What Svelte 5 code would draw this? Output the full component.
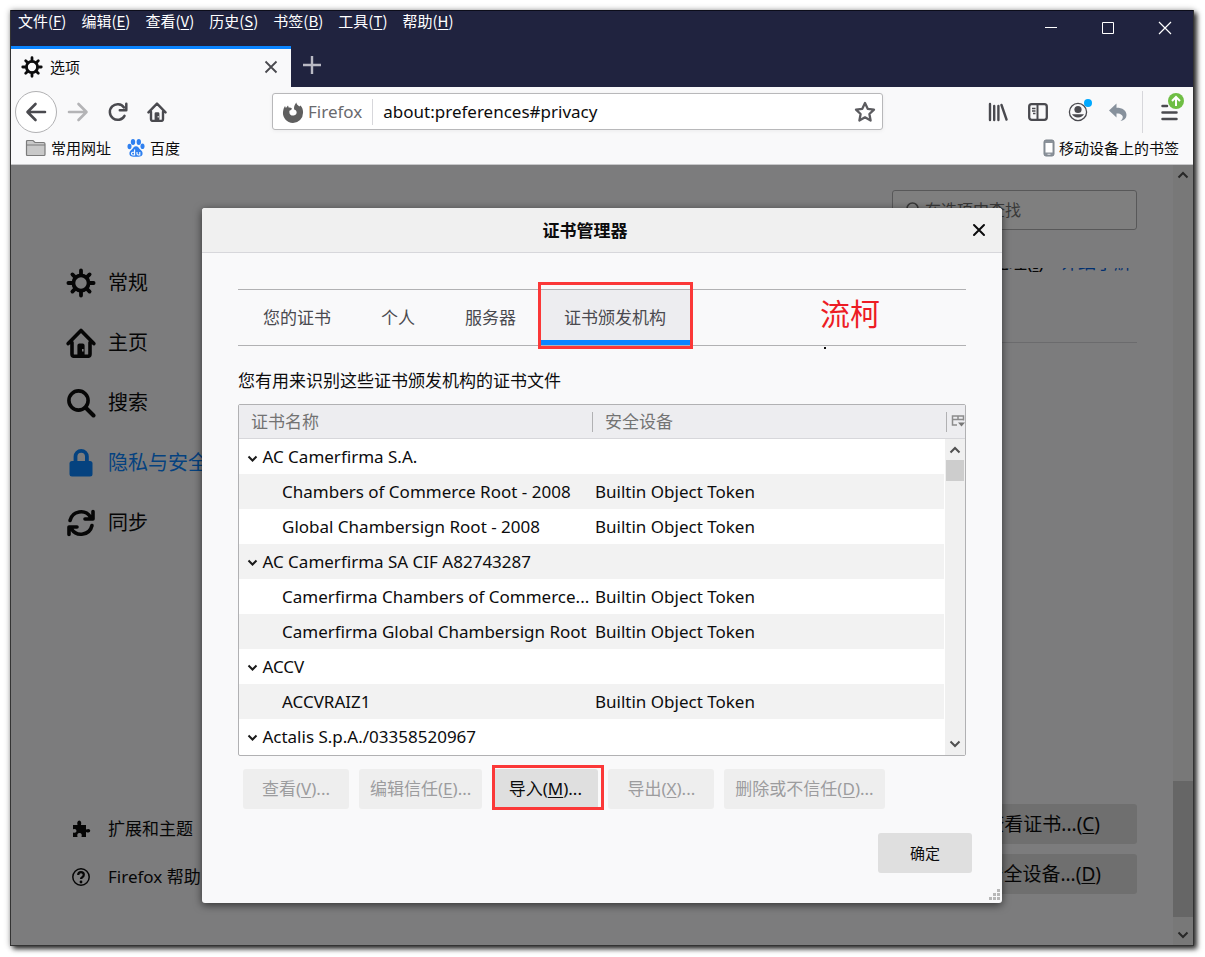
<script lang="ts">
	type Entry = { label: string; key: string }
	type Cert = { name: string; device?: string }

	const menus: Entry[] = [
		{ label: '文件', key: 'F' },
		{ label: '编辑', key: 'E' },
		{ label: '查看', key: 'V' },
		{ label: '历史', key: 'S' },
		{ label: '书签', key: 'B' },
		{ label: '工具', key: 'T' },
		{ label: '帮助', key: 'H' },
	]

	const categories = [
		{ id: 'general', label: '常规' },
		{ id: 'home', label: '主页' },
		{ id: 'search', label: '搜索' },
		{ id: 'privacy', label: '隐私与安全' },
		{ id: 'sync', label: '同步' },
	]

	const tabs = ['您的证书', '个人', '服务器', '证书颁发机构']
	let activeTab = $state('证书颁发机构')

	const certs: Cert[] = [
		{ name: 'AC Camerfirma S.A.' },
		{ name: 'Chambers of Commerce Root - 2008', device: 'Builtin Object Token' },
		{ name: 'Global Chambersign Root - 2008', device: 'Builtin Object Token' },
		{ name: 'AC Camerfirma SA CIF A82743287' },
		{ name: 'Camerfirma Chambers of Commerce...', device: 'Builtin Object Token' },
		{ name: 'Camerfirma Global Chambersign Root', device: 'Builtin Object Token' },
		{ name: 'ACCV' },
		{ name: 'ACCVRAIZ1', device: 'Builtin Object Token' },
		{ name: 'Actalis S.p.A./03358520967' },
	]

	const actions = [
		{ label: '查看', key: 'V', enabled: false },
		{ label: '编辑信任', key: 'E', enabled: false },
		{ label: '导入', key: 'M', enabled: true },
		{ label: '导出', key: 'X', enabled: false },
		{ label: '删除或不信任', key: 'D', enabled: false },
	]
</script>

{#snippet gear(size: number)}
	<svg width={size} height={size} viewBox="0 0 30 30" aria-hidden="true">
		<g fill="none" stroke="currentColor" stroke-linecap="round">
			<circle cx="15" cy="15" r="7.6" stroke-width="3.8" />
			<path
				stroke-width="3.8"
				d="M15 7V2.4M15 23v4.6M7 15H2.4M23 15h4.6M9.3 9.3 6.4 6.4M20.7 9.3l2.9-2.9M9.3 20.7l-2.9 2.9M20.7 20.7l2.9 2.9"
			/>
		</g>
	</svg>
{/snippet}

{#snippet house(size: number)}
	<svg width={size} height={size} viewBox="0 0 30 30" aria-hidden="true">
		<g fill="none" stroke="currentColor" stroke-width="3.6" stroke-linejoin="round" stroke-linecap="round">
			<path d="M2.2 15.6 15 2.4l12.800 13.200M6 14.500V26q0 2.300 2.300 2.300h13.400q2.300 0 2.300-2.300V14.500" />
		</g>
		<path fill="currentColor" fill-rule="evenodd" d="M11.400 28V17.400q0-2 2-2h3.200q2 0 2 2V28zM16 21v2.400h1.600V21z" />
	</svg>
{/snippet}

{#snippet chevron(up: boolean)}
	<svg width="12" height="12" viewBox="0 0 12 12" aria-hidden="true">
		<path d={up ? 'M1.5 8.5 6 4l4.5 4.5' : 'M1.5 3.5 6 8l4.5-4.5'} fill="none" stroke="#505050" stroke-width="2" />
	</svg>
{/snippet}

<div class="window">
	<header class="titlebar">
		<nav class="menus">
			{#each menus as menu}
				<button>{menu.label}(<u>{menu.key}</u>)</button>
			{/each}
		</nav>
		<div class="controls">
			<button aria-label="最小化">
				<svg width="14" height="14" viewBox="0 0 14 14"><path d="M1 6.500h12" stroke="#fff" /></svg>
			</button>
			<button aria-label="最大化">
				<svg width="14" height="14" viewBox="0 0 14 14"><path d="M1.500 1.500h11v11h-11z" fill="none" stroke="#fff" /></svg>
			</button>
			<button aria-label="关闭">
				<svg width="14" height="14" viewBox="0 0 14 14"><path d="m1 1 12 12M13 1 1 13" stroke="#fff" stroke-width="1.200" /></svg>
			</button>
		</div>
	</header>

	<div class="tabstrip">
		<div class="browser-tab">
			{@render gear(22)}
			<span>选项</span>
			<button aria-label="关闭标签页">
				<svg width="14" height="14" viewBox="0 0 14 14"><path d="m1.500 1.500 11 11m0-11-11 11" stroke="#4a4a4f" stroke-width="1.800" /></svg>
			</button>
		</div>
		<button class="new-tab" aria-label="新建标签页">
			<svg width="20" height="20" viewBox="0 0 20 20"><path d="M10 1v18M1 10h18" stroke="#b9b9c4" stroke-width="2.400" /></svg>
		</button>
	</div>

	<div class="toolbar">
		<div class="nav-buttons">
			<button class="back" aria-label="后退">
				<svg width="22" height="20" viewBox="0 0 22 20">
					<path d="M20 10H3m7.500-8L2.500 10l8 8" fill="none" stroke="#4a4a4f" stroke-width="2.600" stroke-linecap="round" stroke-linejoin="round" />
				</svg>
			</button>
			<button aria-label="前进">
				<svg width="22" height="20" viewBox="0 0 22 20">
					<path d="M2 10h17m-7.500-8 8 8-8 8" fill="none" stroke="#b4b4b6" stroke-width="2.600" stroke-linecap="round" stroke-linejoin="round" />
				</svg>
			</button>
			<button aria-label="刷新">
				<svg width="22" height="22" viewBox="0 0 22 22">
					<path d="M17.500 14.800a7.800 7.800 0 1 1-.5-8.300" fill="none" stroke="#4a4a4f" stroke-width="2.500" stroke-linecap="round" />
					<path d="M19.300 2.800v6.500h-6.500" fill="none" stroke="#4a4a4f" stroke-width="2.500" stroke-linecap="round" stroke-linejoin="round" />
				</svg>
			</button>
			<button class="grey" aria-label="主页">{@render house(20)}</button>
		</div>

		<div class="urlbar">
			<svg width="22" height="22" viewBox="0 0 22 22" aria-hidden="true">
				<path
					fill="#5f5f5f"
					d="M11 22A10 10 0 0 1 1.200 9.800C1.500 8 2 6.600 3 5l.9 2L6 4.500l.8 2.200c1-.2 2 0 3 .5-.1 1.600-1 2-2.300 2.500-.8 4.300 2.500 5.600 5 4.600 3-1.200 2.800-5-.3-5.700C12 7.500 11.500 5 14.300 1.500c.3 2 1.500 2.500 3 4l1.200-1C20.500 6.500 21.200 9 21 12A10 10 0 0 1 11 22z"
				/>
			</svg>
			<span class="identity">Firefox</span>
			<input type="text" aria-label="地址" value="about:preferences#privacy" />
			<button aria-label="添加书签">
				<svg width="22" height="22" viewBox="0 0 22 22">
					<path d="m11 2 2.700 5.800 6.300.8-4.600 4.400 1.200 6.500-5.600-3.200-5.600 3.200L6.600 13 2 8.600l6.300-.8z" fill="none" stroke="#5c5c60" stroke-width="2.300" stroke-linejoin="round" />
				</svg>
			</button>
		</div>

		<div class="tools">
			<button aria-label="我的足迹">
				<svg width="20" height="20" viewBox="0 0 20 20">
					<path d="M2 2v16M6.200 4v14M10.400 4v14M13.500 3l5 14.500" fill="none" stroke="#4a4a4f" stroke-width="2.400" stroke-linecap="round" />
				</svg>
			</button>
			<button aria-label="侧栏">
				<svg width="20" height="20" viewBox="0 0 20 20">
					<rect x="1.200" y="2.200" width="17.600" height="15.600" rx="2.500" fill="none" stroke="#4a4a4f" stroke-width="2.300" />
					<path d="M9.500 2.500v15" stroke="#4a4a4f" stroke-width="2" />
					<path d="M4 6.500h3.500M4 9h3.500M5 11.500h2.500" stroke="#4a4a4f" stroke-width="1.300" />
				</svg>
			</button>
			<button class="badged" aria-label="账户">
				<svg width="20" height="20" viewBox="0 0 20 20">
					<circle cx="10" cy="10" r="8.600" fill="none" stroke="#4a4a4f" stroke-width="1.300" />
					<circle cx="10" cy="7.500" r="3.600" fill="#4a4a4f" />
					<path d="M4 12.300h12a6.500 5 0 0 1-12 0z" fill="#4a4a4f" />
				</svg>
				<i class="dot"></i>
			</button>
			<button aria-label="撤销关闭标签页">
				<svg width="20" height="20" viewBox="0 0 20 20">
					<path d="M1 8.500 8.500 1.500v4.200c6 0 10 2.600 10 7.300 0 3.300-2.200 5.300-6 6 2.400-2 3-4 1.500-5.700-1.200-1.500-3-1.800-5.500-1.800v4z" fill="#87919c" />
				</svg>
			</button>
			<span class="divider"></span>
			<button class="badged" aria-label="打开菜单">
				<svg width="20" height="20" viewBox="0 0 20 20">
					<path d="M3.500 4H8M3.500 10.500h14M3.500 17h14" stroke="#4a4a4f" stroke-width="2.500" stroke-linecap="round" />
				</svg>
				<i class="update">
					<svg width="16" height="16" viewBox="0 0 16 16">
						<circle cx="8" cy="8" r="8" fill="#6fbe44" />
						<path d="M8 13V4M4 8l4-4 4 4" fill="none" stroke="#fff" stroke-width="2" />
					</svg>
				</i>
			</button>
		</div>
	</div>

	<div class="bookmarks">
		<a href="#common">
			<svg width="22" height="18" viewBox="0 0 22 18" aria-hidden="true">
				<path d="M1.500 15.500V2.500q0-1 1-1h5.500l2 2h8.500q1.500 0 1.500 1.500v10.500q0 1-1 1h-16.500q-1 0-1-1z" fill="#c9c9c9" stroke="#7b7b7b" stroke-width="1.200" />
				<path d="M2 6h18" stroke="#7b7b7b" />
			</svg>
			常用网址
		</a>
		<a href="#baidu">
			<svg width="20" height="20" viewBox="0 0 20 20" aria-hidden="true">
				<g fill="#2f80f0">
					<ellipse cx="7" cy="4" rx="2.200" ry="3" />
					<ellipse cx="12.800" cy="4" rx="2.200" ry="3" />
					<ellipse cx="3.500" cy="8.500" rx="2" ry="2.800" />
					<ellipse cx="16.500" cy="8.300" rx="2" ry="2.800" />
					<path d="M10 8.200c2 0 2.800 1.800 4.200 3.300 1.500 1.400 2.800 2.600 2.300 4.800-.5 2-2 2.500-6.500 2.500s-6-.5-6.500-2.500c-.5-2.200.8-3.400 2.300-4.800C7.200 10 8 8.200 10 8.200z" />
				</g>
				<path d="M8.600 11.500V17H6.800q-1.300 0-1.300-1.400T6.800 14.200h1.600M11 14v1.800q0 1.200 1.200 1.200h1.600V14" fill="none" stroke="#fff" stroke-width="1.100" />
			</svg>
			百度
		</a>
		<a href="#mobile" class="mobile">
			<svg width="12" height="18" viewBox="0 0 12 18" aria-hidden="true">
				<rect x="1" y="1" width="10" height="16" rx="2" fill="#8b929a" stroke="#7b838b" />
				<path d="M2.500 4h7v9.500h-7z" fill="#fff" />
				<path d="M4.500 15.300h3" stroke="#dfe2e5" />
			</svg>
			移动设备上的书签
		</a>
	</div>

	<div class="content">
		<div class="page">
			<nav class="sidebar">
				{#each categories as item}
					<a href="#{item.id}" class:selected={item.id === 'privacy'}>
						{#if item.id === 'general'}
							{@render gear(30)}
						{:else if item.id === 'home'}
							{@render house(30)}
						{:else if item.id === 'search'}
							<svg width="30" height="30" viewBox="0 0 30 30" aria-hidden="true">
								<circle cx="12.500" cy="12.500" r="9.600" fill="none" stroke="currentColor" stroke-width="3.600" />
								<path d="m19.500 19.500 8 8" stroke="currentColor" stroke-width="4" stroke-linecap="round" />
							</svg>
						{:else if item.id === 'privacy'}
							<svg width="30" height="30" viewBox="0 0 30 30" aria-hidden="true">
								<rect x="3.500" y="13" width="23" height="15.500" rx="2.500" fill="currentColor" />
								<path d="M9.500 14V8.500a5.700 5.700 0 0 1 11.400 0V14" fill="none" stroke="currentColor" stroke-width="3.800" />
							</svg>
						{:else}
							<svg width="30" height="30" viewBox="0 0 30 30" aria-hidden="true">
								<g fill="none" stroke="currentColor" stroke-width="3.600" stroke-linecap="round" stroke-linejoin="round">
									<path d="M4 12.500A11.300 11.300 0 0 1 24.500 9M27 3.500V11h-8" />
									<path d="M26 17.500A11.300 11.300 0 0 1 5.500 21M3 26.500V19h8" />
								</g>
							</svg>
						{/if}
						{item.label}
					</a>
				{/each}
				<div class="links">
					<a href="#addons">
						<svg width="20" height="20" viewBox="0 0 20 20" aria-hidden="true">
							<path d="M2 6h4.500Q5.500 2 8.200 1.500 11 2 10 6h5v4.500q4-1.500 4.300 1.200-.3 2.800-4.300 1.300V18h-4.500q1-4-2-4t-2 4H2v-4.500q3.500.8 3.500-1.600T2 10.300z" fill="currentColor" />
						</svg>
						扩展和主题
					</a>
					<a href="#support">
						<svg width="20" height="20" viewBox="0 0 20 20" aria-hidden="true">
							<circle cx="10" cy="10" r="8.200" fill="none" stroke="currentColor" stroke-width="1.500" />
							<path d="M7.200 8q0-2.800 2.800-2.800T12.800 7.800q0 1.600-1.500 2.400-1.300.7-1.300 1.900" fill="none" stroke="currentColor" stroke-width="2.200" />
							<circle cx="10" cy="15" r="1.400" fill="currentColor" />
						</svg>
						Firefox 帮助
					</a>
				</div>
			</nav>

			<main>
				<label class="find">
					<svg width="18" height="18" viewBox="0 0 18 18" aria-hidden="true">
						<circle cx="7.500" cy="7.500" r="5.500" fill="none" stroke="#737373" stroke-width="1.600" />
						<path d="m11.500 11.500 5 5" stroke="#737373" stroke-width="1.600" />
					</svg>
					<input type="search" placeholder="在选项中查找" aria-label="在选项中查找" />
				</label>
				<div class="clipped">
					<span>处理(<u>I</u>)</span>
					<a href="#more">详细了解</a>
				</div>
				<hr />
				<div class="cert-buttons">
					<button>查看证书...(<u>C</u>)</button>
					<button>安全设备...(<u>D</u>)</button>
				</div>
			</main>

			<div class="page-scroll">
				{@render chevron(true)}
				<i></i>
				{@render chevron(false)}
			</div>
		</div>

		<div class="overlay">
			<div class="dialog" role="dialog" aria-labelledby="dialog-title">
				<div class="dialog-title">
					<h1 id="dialog-title">证书管理器</h1>
					<button aria-label="关闭">
						<svg width="14" height="14" viewBox="0 0 14 14"><path d="m2 2 10 10m0-10L2 12" stroke="#0c0c0d" stroke-width="2" stroke-linecap="round" /></svg>
					</button>
				</div>

				<div class="dialog-body">
					<div class="cert-tabs" role="tablist">
						{#each tabs as tab}
							<button role="tab" aria-selected={activeTab === tab} class:active={activeTab === tab} onclick={() => (activeTab = tab)}>
								{tab}
							</button>
						{/each}
						<span class="note">流柯</span>
					</div>

					<p>您有用来识别这些证书颁发机构的证书文件</p>

					<div class="tree">
						<table>
							<thead>
								<tr>
									<th class="name"><span>证书名称</span></th>
									<th><span>安全设备</span></th>
									<th class="picker">
										<button aria-label="选择要显示的列">
											<svg width="14" height="14" viewBox="0 0 14 14">
												<path d="M6 11H1.500V2h11v4.500M1.500 5.500h11M7 2v3.500" fill="none" stroke="#8c8c8c" stroke-width="1.500" />
												<path d="M7 8.500h7L10.500 12.500z" fill="#777" />
											</svg>
										</button>
									</th>
								</tr>
							</thead>
							<tbody>
								{#each certs as cert}
									<tr>
										{#if cert.device}
											<td class="child">{cert.name}</td>
											<td colspan="2">{cert.device}</td>
										{:else}
											<td class="group" colspan="3">
												<svg width="11" height="8" viewBox="0 0 11 8" aria-hidden="true">
													<path d="m1.500 1.500 4 4 4-4" fill="none" stroke="#1a1a1a" stroke-width="2" />
												</svg>
												{cert.name}
											</td>
										{/if}
									</tr>
								{/each}
							</tbody>
						</table>
						<div class="tree-scroll">
							{@render chevron(true)}
							<i></i>
							{@render chevron(false)}
						</div>
					</div>

					<div class="actions">
						{#each actions as action}
							<button disabled={!action.enabled}>{action.label}(<u>{action.key}</u>)...</button>
						{/each}
					</div>
				</div>

				<div class="dialog-footer">
					<button>确定</button>
				</div>
				<svg class="resizer" width="12" height="12" viewBox="0 0 12 12" aria-hidden="true">
					<path d="M8 0h3v3H8zM4 4h3v3H4zM8 4h3v3H8zM0 8h3v3H0zM4 8h3v3H4zM8 8h3v3H8z" fill="#b8b8b8" />
				</svg>
			</div>
		</div>
	</div>
</div>

<style>
	:global(body) {
		background: #fff;
	}

	:global(#app) {
		box-sizing: border-box;
		min-height: 100vh;
		padding: 10px 11px 11px 10px;
		display: grid;
	}

	.window,
	.window * {
		box-sizing: border-box;
	}

	.window {
		display: flex;
		flex-direction: column;
		border: 1px solid #333;
		border-top: 0;
		background: #f9f9fa;
		box-shadow: 3px 3px 5px rgba(0, 0, 0, 0.8), 0 0 6px rgba(0, 0, 0, 0.3);
		color: #0c0c0d;
		font: 15px/20px 'Noto Sans', 'Noto Sans CJK SC', sans-serif;
	}

	button,
	input {
		border: 0;
		padding: 0;
		background: none;
		font: inherit;
		color: inherit;
	}

	svg {
		flex: none;
		display: block;
	}

	a {
		color: inherit;
		text-decoration: none;
	}

	u {
		text-underline-offset: 2px;
	}

	.titlebar {
		display: flex;
		justify-content: space-between;
		height: 36px;
		background: #20233f;
		border-top: 1px solid #0c0d1a;
		color: #fff;
	}

	.menus {
		display: flex;
		align-items: flex-start;
		gap: 15px;
		padding: 0 7px;
		font-size: 15px;
		font-family: 'Noto Sans CJK SC', sans-serif;
	}

	.controls {
		display: flex;
		padding-bottom: 2px;

		button {
			width: 57px;
			display: grid;
			place-items: center;
		}
	}

	.tabstrip {
		display: flex;
		height: 41px;
		background: #20233f;
	}

	.browser-tab {
		width: 280px;
		display: flex;
		align-items: center;
		gap: 7px;
		padding: 0 13px 3px 10px;
		border-top: 3px solid #0a84ff;
		background: #f9f9fa;

		button {
			margin-left: auto;
		}
	}

	.new-tab {
		width: 42px;
		padding-bottom: 3px;
		display: grid;
		place-items: center;
	}

	.toolbar {
		display: flex;
		align-items: center;
		justify-content: space-between;
		height: 49px;
		padding: 0 14px 0 4px;
	}

	.nav-buttons {
		display: flex;
		align-items: center;
		gap: 18px;
	}

	.back {
		width: 42px;
		height: 42px;
		margin-right: -8px;
		display: grid;
		place-items: center;
		border: 1px solid #b1b1b3;
		border-radius: 50%;
		background: #fff;
	}

	.grey {
		color: #4a4a4f;
	}

	.urlbar {
		flex: 0 1 611px;
		height: 37px;
		display: flex;
		align-items: center;
		padding: 0 6px 0 9px;
		border: 1px solid #b8b8ba;
		border-radius: 3px;
		background: #fff;
		box-shadow: 0 1px 4px rgba(0, 0, 0, 0.06);
		font-size: 17px;

		input {
			flex: 1;
			min-width: 0;
			padding: 4px 10px;
			outline: 0;
		}
	}

	.identity {
		padding: 3px 10px 3px 4px;
		border-right: 1px solid #d7d7db;
		color: #6a6a6e;
	}

	.tools {
		display: flex;
		align-items: center;
		gap: 20px;
	}

	.divider {
		width: 1px;
		height: 42px;
		margin: 0 -4px 0 -6px;
		background: #d7d7db;
	}

	.badged {
		position: relative;
	}

	.dot {
		position: absolute;
		top: -3px;
		right: -4px;
		width: 8px;
		height: 8px;
		border-radius: 50%;
		background: #00a9ff;
	}

	.update {
		position: absolute;
		top: -9px;
		right: -5px;
	}

	.bookmarks {
		display: flex;
		align-items: center;
		height: 29px;
		gap: 15px;
		padding: 0 14px 4px;
		border-bottom: 1px solid #c8c8ca;

		a {
			display: flex;
			align-items: center;
			gap: 4px;
		}

		.mobile {
			margin-left: auto;
		}
	}

	.content {
		flex: 1;
		display: grid;
	}

	.page,
	.overlay {
		grid-area: 1 / 1;
	}

	.page {
		display: flex;
		background: #f9f9fa;
	}

	.overlay {
		position: relative;
		display: grid;
		place-items: center;
		background: rgba(0, 0, 0, 0.5);
	}

	.sidebar {
		width: 260px;
		display: flex;
		flex-direction: column;
		padding: 88px 0 44px 55px;
		font-size: 20px;

		a {
			height: 60px;
			display: flex;
			align-items: center;
			gap: 12px;
			white-space: nowrap;
		}

		.selected {
			color: #0a84ff;
		}
	}

	.links {
		margin-top: auto;
		padding-left: 5px;
		font-size: 17px;

		a {
			height: 48px;
			gap: 17px;
		}
	}

	main {
		flex: 1;
		display: flex;
		flex-direction: column;
		align-items: flex-end;
		padding: 25px 36px 51px 0;
		font-size: 19px;
	}

	.find {
		width: 245px;
		height: 40px;
		display: flex;
		align-items: center;
		gap: 2px;
		padding: 0 12px;
		border: 1px solid #b1b1b3;
		border-radius: 3px;
		background: #fff;
		font-size: 16px;

		input {
			min-width: 0;
			outline: 0;
		}

		input::placeholder {
			color: #737373;
			opacity: 1;
		}
	}

	.clipped {
		display: flex;
		align-items: flex-end;
		gap: 16px;
		height: 4px;
		margin-top: 38px;
		padding-right: 5px;
		overflow: hidden;
		font-size: 18px;
		line-height: 20px;

		a {
			color: #0060df;
		}
	}

	hr {
		width: 100%;
		margin: 70px 0 0;
		border: 0;
		border-top: 1px solid #d7d7db;
	}

	.cert-buttons {
		display: grid;
		gap: 10px;
		margin-top: auto;

		button {
			height: 40px;
			padding: 0 36px;
			border-radius: 3px;
			background: #dedede;
		}
	}

	.page-scroll,
	.tree-scroll {
		display: flex;
		flex-direction: column;
		align-items: center;
		background: #f0f0f0;

		i {
			width: 100%;
			background: #cdcdcd;
		}
	}

	.page-scroll {
		width: 20px;
		padding: 4px 0;

		i {
			height: 136px;
			margin: auto 0 12px;
		}
	}

	.dialog {
		position: relative;
		width: min(800px, 100%);
		border-radius: 3px;
		background: #f9f9fa;
		box-shadow: 0 2px 8px rgba(0, 0, 0, 0.6);
		font-size: 17px;
	}

	.dialog-title {
		display: grid;
		grid-template-columns: 1fr 22px;
		align-items: center;
		height: 45px;
		padding-right: 12px;
		border-bottom: 1px solid #d7d7db;
		border-radius: 3px 3px 0 0;
		background: #f0f0f0;

		h1 {
			margin: 0;
			padding-top: 2px;
			text-align: center;
			font-size: 17px;
			line-height: 24px;
		}

		button {
			justify-self: center;
		}
	}

	.dialog-body {
		padding: 36px 36px 0;

		p {
			margin: 23px 0 11px;
			line-height: 24px;
		}
	}

	.cert-tabs {
		position: relative;
		display: flex;
		height: 57px;
		border: solid #b1b1b3;
		border-width: 1px 0;
		color: #4a4a4f;

		button {
			padding: 2px 25px 0;
		}

		.active {
			position: relative;
			border-bottom: 5px solid #0a84ff;
			padding: 7px 27px 0 23px;
			background: #ededf0;
		}

		/* red marker frame */
		.active::after {
			content: '';
			position: absolute;
			inset: -8px 0 -9px -3px;
			border: 3px solid #fb3838;
		}
	}

	.cert-tabs::after {
		content: '';
		position: absolute;
		right: 140px;
		bottom: -4px;
		width: 2px;
		height: 2px;
		background: #0c0c0d;
	}

	.note {
		margin: 4px 86px auto auto;
		color: #ed1c24;
		font-size: 30px;
		line-height: 40px;
	}

	.tree {
		position: relative;
		padding-bottom: 1px;
		border: 1px solid #b1b1b3;
		border-radius: 2px;
		background: #fff;
	}

	table {
		width: 100%;
		table-layout: fixed;
		border-collapse: collapse;
	}

	th {
		height: 34px;
		padding: 2px 0 0;
		border-bottom: 1px solid #d7d7db;
		background: #ededf0;
		color: #737373;
		font-weight: 400;
		text-align: left;

		span {
			display: block;
			padding-left: 12px;
			border-right: 1px solid #b1b1b3;
		}
	}

	.name {
		width: 354px;
	}

	.picker {
		width: 18px;

		button {
			padding-left: 4px;
		}
	}

	td {
		height: 35px;
		padding: 2px 0 0 2px;
		white-space: nowrap;
	}

	tbody tr:nth-child(even) {
		background: #f2f2f2;
	}

	.child {
		padding-left: 43px;
	}

	.group {
		padding-left: 8px;

		svg {
			display: inline-block;
			vertical-align: middle;
		}
	}

	.tree-scroll {
		position: absolute;
		top: 34px;
		right: 0;
		bottom: 0;
		width: 21px;
		padding: 5px 1px;
		border-left: 1px solid #fff;

		i {
			height: 21px;
			margin: 4px 0 auto;
		}
	}

	.actions {
		display: flex;
		gap: 10px;
		padding: 13px 5px 0;

		button {
			position: relative;
			min-width: 106px;
			height: 40px;
			padding: 0 11px;
			border-radius: 3px;
			background: #dfdfdf;
		}

		button:disabled {
			background: #eee;
			color: #9c9c9e;
		}

		button:enabled::after {
			content: '';
			position: absolute;
			inset: -4px -6px -1px 0;
			border: 3px solid #fb3838;
		}
	}

	.dialog-footer {
		display: flex;
		justify-content: flex-end;
		padding: 24px 30px 30px;

		button {
			width: 94px;
			height: 40px;
			border-radius: 3px;
			background: #dfdfdf;
			font-size: 15px;
		}
	}

	.resizer {
		position: absolute;
		right: 1px;
		bottom: 2px;
	}
</style>
